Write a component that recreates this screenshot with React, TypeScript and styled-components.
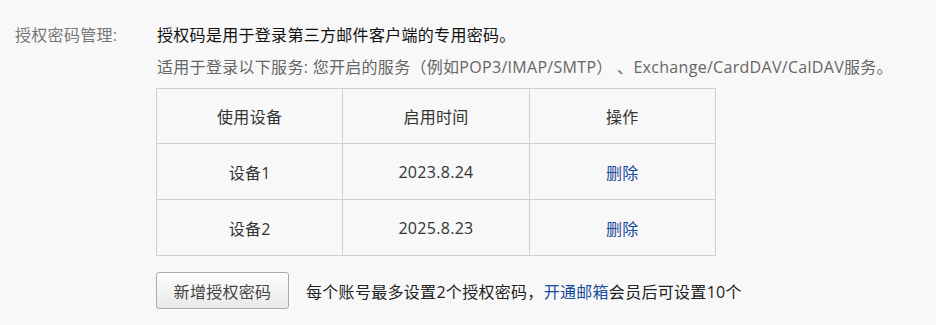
import React from 'react';
import styled, { createGlobalStyle } from 'styled-components';

const GlobalStyle = createGlobalStyle`
  body {
    margin: 0;
    background: #f8f8f8;
    font-family: 'Open Sans', 'Noto Sans CJK SC', sans-serif;
    font-size: 16px;
    letter-spacing: 0.3px;
  }
`;

const devices = [
  { name: '设备1', date: '2023.8.24' },
  { name: '设备2', date: '2025.8.23' },
];

const App = () => {
  return (
    <>
      <GlobalStyle />
      <Section>
        <Label>授权密码管理:</Label>
        <Content>
          <Lead>授权码是用于登录第三方邮件客户端的专用密码。</Lead>
          <Note>
            适用于登录以下服务: 您开启的服务（例如POP3/IMAP/SMTP） 、Exchange/CardDAV/CalDAV服务。
          </Note>
          <Table>
            <thead>
              <tr>
                <Th>使用设备</Th>
                <Th>启用时间</Th>
                <Th>操作</Th>
              </tr>
            </thead>
            <tbody>
              {devices.map((d) => (
                <tr key={d.name}>
                  <Td>{d.name}</Td>
                  <Td>{d.date}</Td>
                  <Td>
                    <Link href="#">删除</Link>
                  </Td>
                </tr>
              ))}
            </tbody>
          </Table>
          <Footer>
            <Button>新增授权密码</Button>
            <Hint>
              每个账号最多设置2个授权密码，<Link href="#">开通邮箱</Link>会员后可设置10个
            </Hint>
          </Footer>
        </Content>
      </Section>
    </>
  );
};

export default App;

const Section = styled.div`
  display: grid;
  grid-template-columns: 141px 1fr;
  padding: 19px 0 0 15px;
`;

const Label = styled.div`
  color: #777;
  line-height: 32px;
`;

const Content = styled.div`
  display: flex;
  flex-direction: column;
  align-items: flex-start;
`;

const Lead = styled.div`
  color: #111;
  line-height: 32px;
  padding-left: 1px;
`;

const Note = styled.div`
  color: #666;
  line-height: 32px;
  padding-left: 1px;
`;

const Table = styled.table`
  margin-top: 5px;
  width: 560px;
  border-collapse: collapse;
  table-layout: fixed;
`;

const Th = styled.th`
  height: 54px;
  border: 1px solid #cfcfcf;
  font-weight: normal;
  color: #333;
  text-align: center;
  padding: 0;
`;

const Td = styled.td`
  height: 55px;
  border: 1px solid #cfcfcf;
  color: #333;
  text-align: center;
  padding: 0;
`;

const Link = styled.a`
  color: #1a4a9c;
  text-decoration: none;
`;

const Footer = styled.div`
  display: flex;
  align-items: center;
  gap: 17px;
  margin-top: 16px;
`;

const Button = styled.button`
  width: 133px;
  height: 37px;
  border: 1px solid #aaa;
  border-radius: 3px;
  background: linear-gradient(#fdfdfd, #e9e9e9);
  color: #444;
  font-family: inherit;
  font-size: 16px;
  letter-spacing: inherit;
  padding: 0;
`;

const Hint = styled.span`
  color: #222;
`;
